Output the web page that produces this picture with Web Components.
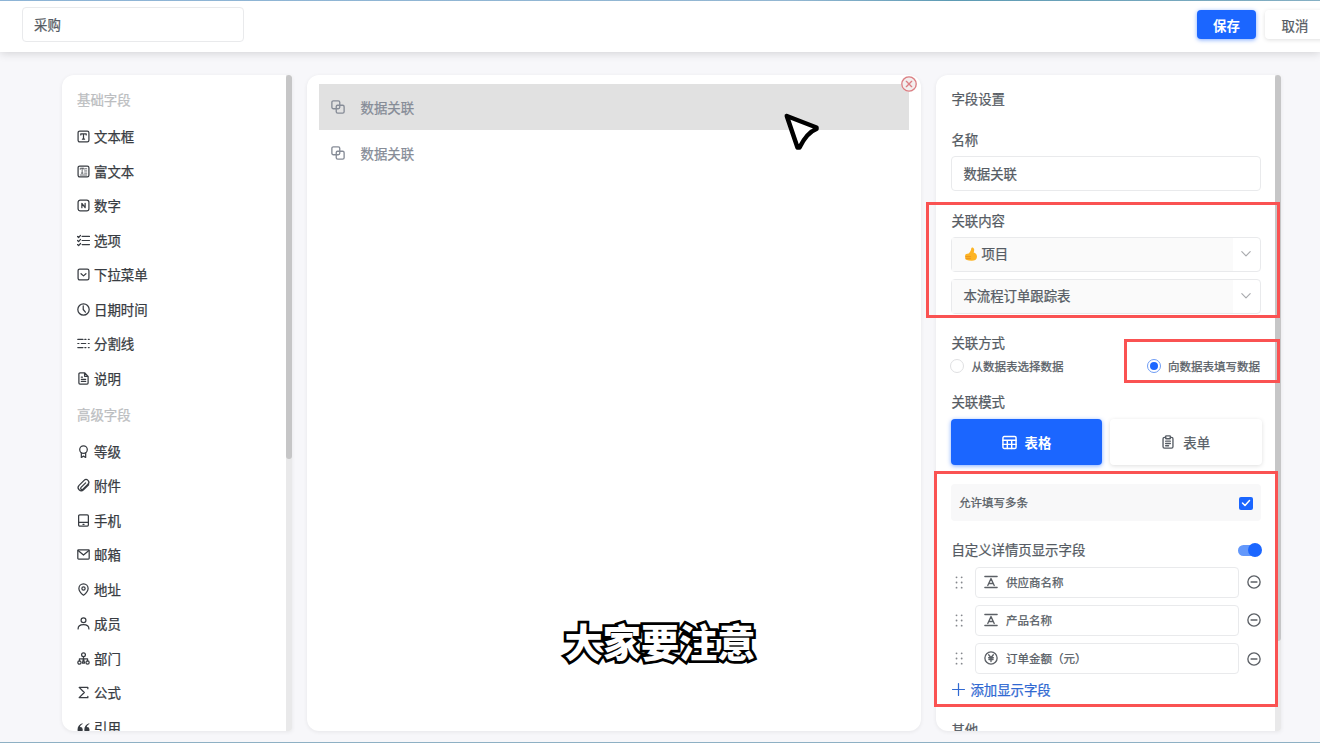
<!DOCTYPE html>
<html lang="zh-CN">
<head>
<meta charset="utf-8">
<title>采购</title>
<style>
  body {
    --primary: #1b66ff;
    --line: #e9eaec;
    --mark: #fa5252;
    -webkit-text-stroke: .25px currentColor;
    background: #f7f7fa;
    color: #565c64;
    font-family: "Noto Sans CJK SC", sans-serif;
    font-size: 13.4px;
    height: 743px;
    margin: 0;
    overflow: hidden;
    position: relative;
    width: 1320px;
  }
</style>
</head>
<body>
<form-designer></form-designer>

<script>
const ICONS = {
  text: '<rect x="2" y="2" width="20" height="20" rx="3"/><path d="M7 9V7h10v2M12 7v10M10 17h4"/>',
  rich: '<rect x="2" y="2" width="20" height="20" rx="3"/><path stroke-width="1.4" d="M6 8V6h7v2M9.500 6v9M8 15h3M15 7h3M14 11h4M14 15h4M6 18.500h12"/>',
  number: '<rect x="2" y="2" width="20" height="20" rx="4"/><path d="M9 16V8l6 8V8"/>',
  options: '<path d="M9.500 4.500H23M9.500 12H23M9.500 19.500H23M1 4.500l2 2 3.500-4M1 12l2 2 3.500-4M1 19.500l2 2 3.500-4"/>',
  dropdown: '<rect x="2" y="2" width="20" height="20" rx="3"/><path d="M7.500 10.500l4.500 4 4.500-4"/>',
  clock: '<circle cx="12" cy="12" r="10.500"/><path d="M11.500 5.500V12l4 5"/>',
  divider: '<path d="M1.500 4.500H11M14.500 4.500h2M21 4.500h1.500M1.500 12h2M8 12h8M21 12h1.500M1.500 19.500H11M14.500 19.500h2M21 19.500h1.500"/>',
  doc: '<path d="M14 1.500H5.500a2 2 0 0 0-2 2v17a2 2 0 0 0 2 2h13a2 2 0 0 0 2-2V8zM14 1.500V8h6.500M8 9.500h2M8 13.500h8M8 17.500h8"/>',
  badge: '<circle cx="12" cy="8.500" r="7"/><path d="M8 14.500V23l4-2.500 4 2.500v-8.500"/>',
  clip: '<path d="M21.500 10.500l-9.500 9.500a5.800 5.800 0 0 1-8.200-8.200l9.300-9.300a5 5 0 0 1 7.200 7.200l-9.300 9.300a2.400 2.400 0 0 1-3.500-3.500l8.400-8.400"/>',
  phone: '<rect x="3" y="1.500" width="18" height="21" rx="2"/><path d="M3 15.500h18M11 19h2"/>',
  mail: '<rect x="1.500" y="3.500" width="21" height="17" rx="1.500"/><path d="M2 4.500l10 8.500 10-8.500"/>',
  pin: '<path d="M12 22.500S3.500 16 3.500 10a8.500 8.500 0 0 1 17 0c0 6-8.500 12.500-8.500 12.500z"/><circle cx="12" cy="10" r="3"/>',
  user: '<circle cx="12" cy="6" r="4.500"/><path d="M2 22c0-5.500 4-8 10-8s10 2.500 10 8"/>',
  org: '<circle cx="12" cy="5" r="3.500"/><circle cx="4.500" cy="19.500" r="3"/><circle cx="19.500" cy="19.500" r="3"/><path d="M12 8.500v4M4.500 16.500v-4h15v4M12 12.500l-2 8h4z"/>',
  sigma: '<path d="M20 5V2.500H4L13.500 12 4 21.500h16V19"/>',
  quote: '<path fill="currentColor" stroke="none" d="M10 4C4 6 1 10 1 16a4.800 4.800 0 1 0 4.500-4.800C6 8.500 8 6.500 10.500 5.500zM22.500 4c-6 2-9 6-9 12a4.800 4.800 0 1 0 4.500-4.800c.5-2.700 2.500-4.700 5-5.700z"/>',
  link: '<rect x="1.500" y="1.500" width="13.500" height="13.500" rx="2.500"/><path fill="none" d="M11 9h9a2.500 2.500 0 0 1 2.500 2.500V20a2.500 2.500 0 0 1-2.500 2.500h-8.500A2.500 2.500 0 0 1 9 20v-9a2 2 0 0 1 2-2z"/>',
  table: '<rect x="1.500" y="2.500" width="21" height="19" rx="2"/><path d="M1.500 8.500h21M1.500 15h21M8.500 8.500v13M15.500 8.500v13"/>',
  clipboard: '<path d="M8 4H6a2.500 2.500 0 0 0-2.500 2.500V20A2.500 2.500 0 0 0 6 22.500h12a2.500 2.500 0 0 0 2.500-2.500V6.500A2.500 2.500 0 0 0 18 4h-2"/><rect x="8" y="1.500" width="8" height="5" rx="1"/><path d="M8 10.500h8M8 14.500h8M8 18.500h5"/>',
  caret: '<path d="M2 6.500l10 10 10-10"/>',
  letter: '<path d="M1.500 2.500h21M1.500 21.500h21M6.500 18l5.500-12 5.500 12M8.500 14.500h7"/>',
  yen: '<circle cx="12" cy="12" r="10.500"/><path d="M8 6.500l4 5 4-5M8 11.500h8M8.500 14.500h7M12 11.500v6.500"/>',
  minus: '<circle cx="12" cy="12" r="10.500"/><path d="M7 12h10"/>',
  plus: '<path d="M12 1v22M1 12h22"/>',
  remove: '<circle cx="12" cy="12" r="10.800"/><path d="M8 8l8 8M16 8l-8 8"/>',
  check: '<path d="M5 12l5 5 9-10"/>',
  grip: '<g fill="currentColor" stroke="none"><circle cx="6.500" cy="2.500" r="1.700"/><circle cx="16" cy="2.500" r="1.700"/><circle cx="6.500" cy="12" r="1.700"/><circle cx="16" cy="12" r="1.700"/><circle cx="6.500" cy="21.500" r="1.700"/><circle cx="16" cy="21.500" r="1.700"/></g>',
  thumb: '<path fill="#fdb424" stroke="none" d="M2 14c0-2 3-2.500 6-3 3-3 4-5.500 4.500-9 .3-2 4-2 4.800 1.500.5 2.500-.3 4.500-.8 6 4 1 6 4 5.700 7.500-.3 4.500-4 6.500-9 6.500C6 23.500 2 22 2 19z"/><path fill="none" stroke="#e58a1c" stroke-width="1.300" d="M3 16.500h8M3.500 20h7.500"/>'
};

customElements.define(
  'ui-icon',
  class extends HTMLElement {
    connectedCallback() {
      const size = this.getAttribute('size') || 13;
      const weight = this.getAttribute('weight') || 2.3;
      this.attachShadow({ mode: 'open' });
      this.shadowRoot.innerHTML = `
        <style>
          :host { display: block; flex: none; height: ${size}px; width: ${size}px; }
          svg { display: block; overflow: visible; }
        </style>
        <svg width="${size}" height="${size}" viewBox="0 0 24 24" fill="none" stroke="currentColor"
          stroke-width="${weight}" stroke-linecap="round" stroke-linejoin="round">${ICONS[this.getAttribute('name')]}</svg>
      `;
    }
  }
);

customElements.define(
  'ui-button',
  class extends HTMLElement {
    constructor() {
      super();
      this.attachShadow({ mode: 'open' });
      this.shadowRoot.innerHTML = `
        <style>
          :host {
            align-items: center;
            background: #fff;
            border-radius: 4px;
            box-shadow: 0 1px 4px rgba(0, 0, 0, .13);
            box-sizing: border-box;
            display: flex;
            justify-content: center;
          }

          :host([primary]) {
            -webkit-text-stroke: 0;
            background: var(--primary);
            box-shadow: 0 1px 4px rgba(27, 102, 255, .55);
            color: #fff;
            font-weight: 700;
          }
        </style>
        <slot></slot>
      `;
    }
  }
);

customElements.define(
  'top-bar',
  class extends HTMLElement {
    constructor() {
      super();
      this.attachShadow({ mode: 'open' });
      this.shadowRoot.innerHTML = `
        <style>
          :host {
            background: #fff;
            box-shadow: 0 1px 9px rgba(0, 0, 0, .16);
            box-sizing: border-box;
            display: flex;
            height: 52px;
            padding: 7px 0 0 22px;
            width: 1320px;
          }

          .name {
            border: 1px solid var(--line);
            border-radius: 4px;
            box-sizing: border-box;
            height: 35px;
            line-height: 32px;
            padding-left: 11px;
            width: 222px;
          }

          ui-button { box-sizing: border-box; height: 29px; margin-top: 3px; }
          .save { margin-left: auto; width: 59px; }
          .cancel { flex: none; margin: 3px -5px 0 9px; width: 60px; }
        </style>
        <div class="name">采购</div>
        <ui-button class="save" primary>保存</ui-button>
        <ui-button class="cancel">取消</ui-button>
      `;
    }
  }
);

customElements.define(
  'scroll-panel',
  class extends HTMLElement {
    connectedCallback() {
      this.attachShadow({ mode: 'open' });
      this.shadowRoot.innerHTML = `
        <style>
          :host {
            background: #fff;
            border-radius: 12px;
            box-shadow: 0 1px 4px rgba(0, 0, 0, .07);
            display: flex;
            height: 656px;
            overflow: hidden;
          }

          .content { flex: 1; min-width: 0; overflow: hidden; }
          .track { background: #e9e9ea; width: 6px; }
          .thumb { background: #c6c6c7; border-radius: 3px; height: ${this.getAttribute('thumb')}px; }

          :host([thumb]) { border-radius: 12px 3px 3px 12px; }
        </style>
        <div class="content"><slot></slot></div>
        ${this.hasAttribute('thumb') ? '<div class="track"><div class="thumb"></div></div>' : ''}
      `;
    }
  }
);

customElements.define(
  'field-item',
  class extends HTMLElement {
    connectedCallback() {
      this.attachShadow({ mode: 'open' });
      this.shadowRoot.innerHTML = `
        <style>
          :host {
            align-items: center;
            color: #383c42;
            display: flex;
            gap: 4px;
            height: 34.5px;
          }

          span { margin-bottom: 1.500px; }
        </style>
        <ui-icon name="${this.getAttribute('icon')}"></ui-icon>
        <span><slot></slot></span>
      `;
    }
  }
);

customElements.define(
  'field-palette',
  class extends HTMLElement {
    constructor() {
      super();
      this.attachShadow({ mode: 'open' });
      this.shadowRoot.innerHTML = `
        <style>
          :host { display: block; padding: 6px 15px 0; }
          .group { color: #bcbec1; height: 38.5px; line-height: 36.5px; }
        </style>
        <div class="group">基础字段</div>
        <field-item icon="text">文本框</field-item>
        <field-item icon="rich">富文本</field-item>
        <field-item icon="number">数字</field-item>
        <field-item icon="options">选项</field-item>
        <field-item icon="dropdown">下拉菜单</field-item>
        <field-item icon="clock">日期时间</field-item>
        <field-item icon="divider">分割线</field-item>
        <field-item icon="doc">说明</field-item>
        <div class="group">高级字段</div>
        <field-item icon="badge">等级</field-item>
        <field-item icon="clip">附件</field-item>
        <field-item icon="phone">手机</field-item>
        <field-item icon="mail">邮箱</field-item>
        <field-item icon="pin">地址</field-item>
        <field-item icon="user">成员</field-item>
        <field-item icon="org">部门</field-item>
        <field-item icon="sigma">公式</field-item>
        <field-item icon="quote">引用</field-item>
      `;
    }
  }
);

customElements.define(
  'canvas-row',
  class extends HTMLElement {
    constructor() {
      super();
      this.attachShadow({ mode: 'open' });
      this.shadowRoot.innerHTML = `
        <style>
          :host {
            align-items: center;
            color: #868c97;
            display: flex;
            gap: 15.500px;
            height: 46px;
            margin: 0 12px;
            padding-left: 12px;
            position: relative;
          }

          :host([selected]) { background: #e1e1e1; }

          .remove {
            color: #dc7f84;
            display: none;
            position: absolute;
            right: -8px;
            top: -8px;
          }

          :host([selected]) .remove { background: #f3eeee; border-radius: 50%; display: block; }
        </style>
        <ui-icon name="link" size="14"></ui-icon>
        <span><slot></slot></span>
        <ui-icon class="remove" name="remove" size="16" weight="2"></ui-icon>
      `;
    }
  }
);

customElements.define(
  'select-box',
  class extends HTMLElement {
    constructor() {
      super();
      this.attachShadow({ mode: 'open' });
      this.shadowRoot.innerHTML = `
        <style>
          :host {
            border: 1px solid var(--line);
            border-radius: 4px;
            box-sizing: border-box;
            display: flex;
            height: 35px;
          }

          .value {
            align-items: center;
            background: #fafafa;
            display: flex;
            flex: 1;
            padding: 0 0 3px 11px;
          }

          .arrow {
            align-items: center;
            box-sizing: border-box;
            color: #a9abae;
            display: flex;
            justify-content: center;
            padding: 0 1px 1px 0;
            width: 27px;
          }
        </style>
        <div class="value"><slot></slot></div>
        <div class="arrow"><ui-icon name="caret" size="10" weight="2.8"></ui-icon></div>
      `;
    }
  }
);

customElements.define(
  'radio-option',
  class extends HTMLElement {
    constructor() {
      super();
      this.attachShadow({ mode: 'open' });
      this.shadowRoot.innerHTML = `
        <style>
          :host { align-items: center; display: flex; font-size: 11.5px; gap: 7px; }

          i {
            border: 1px solid #dfe0e2;
            border-radius: 50%;
            box-sizing: border-box;
            height: 14px;
            width: 14px;
          }

          :host([checked]) i {
            background: var(--primary);
            background-clip: content-box;
            border-color: #6e9cf5;
            padding: 2px;
          }
        </style>
        <i></i><slot></slot>
      `;
    }
  }
);

customElements.define(
  'display-field',
  class extends HTMLElement {
    connectedCallback() {
      this.attachShadow({ mode: 'open' });
      this.shadowRoot.innerHTML = `
        <style>
          :host {
            align-items: center;
            display: flex;
            font-size: 11.5px;
            height: 31px;
            margin-bottom: 7.400px;
          }

          .grip { color: #85888d; margin: 0 9px 0 1.500px; }

          .box {
            align-items: center;
            border: 1px solid var(--line);
            border-radius: 4px;
            box-sizing: border-box;
            display: flex;
            flex: 1;
            gap: 8px;
            height: 31px;
            margin-right: 8px;
            padding: 0 0 1px 8px;
          }

          .box ui-icon, .minus { color: #5c6066; }
        </style>
        <ui-icon class="grip" name="grip" size="13"></ui-icon>
        <div class="box"><ui-icon name="${this.getAttribute('icon')}" size="14"></ui-icon><slot></slot></div>
        <ui-icon class="minus" name="minus" size="14"></ui-icon>
      `;
    }
  }
);

customElements.define(
  'field-settings',
  class extends HTMLElement {
    constructor() {
      super();
      this.attachShadow({ mode: 'open' });
      this.shadowRoot.innerHTML = `
        <style>
          :host { display: block; padding: 15px 14px 0 15.400px; }
          .label { height: 20px; line-height: 18px; margin-bottom: 6px; }
          .title { line-height: 17px; margin-bottom: 20px; }

          .input {
            border: 1px solid var(--line);
            border-radius: 4px;
            box-sizing: border-box;
            height: 35px;
            line-height: 32px;
            margin-bottom: 20px;
            padding-left: 11px;
          }

          select-box { margin-bottom: 7px; }
          .thumb { margin: 1px 3px 0 1px; }
          .radios { display: flex; height: 20px; justify-content: space-between; margin: 0 1px 16px -1px; }
          .modes { display: grid; gap: 8px; grid-template-columns: 151px 151.500px; height: 46px; margin: 7px 0 19px -.4px; }
          .modes ui-button { gap: 8px; }

          .multiple {
            align-items: center;
            background: #f8f8f9;
            border-radius: 4px;
            box-sizing: border-box;
            display: flex;
            font-size: 11.5px;
            height: 37px;
            justify-content: space-between;
            margin-bottom: 19px;
            padding: 0 8px 2px 7.500px;
          }

          .checkbox { background: var(--primary); border-radius: 2px; color: #fff; height: 13px; margin: 3px 0 0; width: 14px; }
          .checkbox ui-icon { margin-left: 1px; }
          .custom { align-items: center; display: flex; height: 20px; justify-content: space-between; margin-bottom: 6.500px; }
          .custom span { margin-bottom: 2px; }
          .switch { align-items: center; background: #6398fb; border-radius: 6px; display: flex; height: 11px; justify-content: flex-end; margin-right: 1px; width: 22px; }
          .switch i { background: var(--primary); border-radius: 50%; height: 14px; margin-right: -2px; width: 14px; }
          .add { align-items: center; color: #3069d2; display: flex; gap: 5px; height: 20px; margin: -2px 0 20px 1px; }
          .add span { margin-bottom: 1px; }
        </style>
        <div class="label title">字段设置</div>
        <div class="label">名称</div>
        <div class="input">数据关联</div>
        <div class="label">关联内容</div>
        <select-box><ui-icon class="thumb" name="thumb" size="14"></ui-icon>项目</select-box>
        <select-box style="margin-bottom: 19px">本流程订单跟踪表</select-box>
        <div class="label" style="margin-bottom: 3px">关联方式</div>
        <div class="radios">
          <radio-option>从数据表选择数据</radio-option>
          <radio-option checked>向数据表填写数据</radio-option>
        </div>
        <div class="label">关联模式</div>
        <div class="modes">
          <ui-button primary><ui-icon name="table" size="15"></ui-icon><span>表格</span></ui-button>
          <ui-button><ui-icon name="clipboard" size="14"></ui-icon><span>表单</span></ui-button>
        </div>
        <div class="multiple">允许填写多条<div class="checkbox"><ui-icon name="check" size="12" weight="3"></ui-icon></div></div>
        <div class="custom"><span>自定义详情页显示字段</span><div class="switch"><i></i></div></div>
        <display-field icon="letter">供应商名称</display-field>
        <display-field icon="letter">产品名称</display-field>
        <display-field icon="yen">订单金额（元）</display-field>
        <div class="add"><ui-icon name="plus"></ui-icon><span>添加显示字段</span></div>
        <div class="label">其他</div>
      `;
    }
  }
);

customElements.define(
  'mark-box',
  class extends HTMLElement {
    constructor() {
      super();
      this.attachShadow({ mode: 'open' });
      this.shadowRoot.innerHTML = `
        <style>
          :host { border: 3px solid var(--mark); box-sizing: border-box; display: block; position: absolute; }
        </style>
      `;
    }
  }
);

customElements.define(
  'form-designer',
  class extends HTMLElement {
    constructor() {
      super();
      this.attachShadow({ mode: 'open' });
      this.shadowRoot.innerHTML = `
        <style>
          :host {
            border-bottom: 1px solid #8eb0c4;
            box-sizing: border-box;
            display: block;
            height: 743px;
          }

          :host::before {
            background: linear-gradient(90deg, #8db4d6, #93b7d2 60%, #5d9bb4 72%, #86b0c4);
            content: '';
            height: 1px;
            left: 0;
            position: absolute;
            top: 0;
            width: 100%;
          }

          main { display: flex; gap: 15px; padding: 23px 0 0 62px; }
          .palette { width: 230px; }
          .canvas { width: 614px; }
          .rows { padding-top: 9px; }
          .settings { width: 345px; }

          .cursor { left: 783px; position: absolute; top: 112px; }

          .caption {
            -webkit-text-stroke: 5.500px #000;
            color: #fff;
            font-size: 38.2px;
            font-weight: 900;
            left: 564.500px;
            line-height: 56px;
            paint-order: stroke fill;
            position: absolute;
            stroke-linejoin: round;
            top: 613px;
            white-space: nowrap;
          }
        </style>
        <top-bar></top-bar>
        <main>
          <scroll-panel class="palette" thumb="384"><field-palette></field-palette></scroll-panel>
          <scroll-panel class="canvas">
            <div class="rows">
              <canvas-row selected>数据关联</canvas-row>
              <canvas-row>数据关联</canvas-row>
            </div>
          </scroll-panel>
          <scroll-panel class="settings" thumb="566"><field-settings></field-settings></scroll-panel>
        </main>
        <mark-box style="left: 926px; top: 202px; width: 354px; height: 116px"></mark-box>
        <mark-box style="left: 1124px; top: 339px; width: 156px; height: 44px"></mark-box>
        <mark-box style="left: 934px; top: 471px; width: 344px; height: 236px"></mark-box>
        <svg class="cursor" width="38" height="40" viewBox="0 0 38 40">
          <path d="M3.800 4l29.700 11.500v1.500c-7 2.500-12 8.500-17 18.500h-2z" fill="#fff" stroke="#000" stroke-width="4.500" stroke-linejoin="round"/>
        </svg>
        <div class="caption">大家要注意</div>
      `;
    }
  }
);
</script>
</body>
</html>
